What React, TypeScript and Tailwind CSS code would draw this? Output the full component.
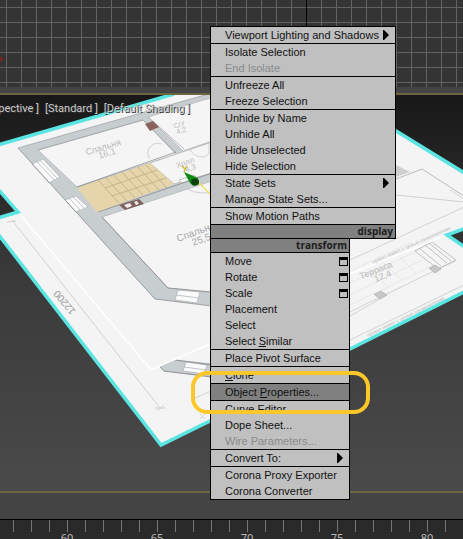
type Item = {
  label: string;
  hotkey?: number;
  disabled?: boolean;
  submenu?: boolean;
  options?: boolean;
  active?: boolean;
};

const displayGroups: Item[][] = [
  [{ label: "Viewport Lighting and Shadows", submenu: true }],
  [{ label: "Isolate Selection" }, { label: "End Isolate", disabled: true }],
  [{ label: "Unfreeze All" }, { label: "Freeze Selection" }],
  [
    { label: "Unhide by Name" },
    { label: "Unhide All" },
    { label: "Hide Unselected" },
    { label: "Hide Selection" },
  ],
  [{ label: "State Sets", submenu: true }, { label: "Manage State Sets..." }],
  [{ label: "Show Motion Paths" }],
];

const transformGroups: Item[][] = [
  [
    { label: "Move", options: true },
    { label: "Rotate", options: true },
    { label: "Scale", options: true },
    { label: "Placement" },
    { label: "Select" },
    { label: "Select Similar", hotkey: 7 },
  ],
  [{ label: "Place Pivot Surface" }],
  [{ label: "Clone", hotkey: 0 }],
  [{ label: "Object Properties...", hotkey: 7, active: true }],
  [
    { label: "Curve Editor" },
    { label: "Dope Sheet..." },
    { label: "Wire Parameters...", disabled: true },
  ],
  [{ label: "Convert To:", submenu: true }],
  [{ label: "Corona Proxy Exporter" }, { label: "Corona Converter" }],
];

const viewportLabels = ["[Perspective ]", "[Standard ]", "[Default Shading ]"];

function Label({ text, hotkey }: { text: string; hotkey?: number }) {
  if (hotkey === undefined) return <span>{text}</span>;
  return (
    <span>
      {text.slice(0, hotkey)}
      <u>{text[hotkey]}</u>
      {text.slice(hotkey + 1)}
    </span>
  );
}

function MenuItem({ item }: { item: Item }) {
  return (
    <li className={item.active ? "bg-[#808080]" : ""}>
      <button
        type="button"
        disabled={item.disabled}
        className="flex h-4 w-full items-center justify-between whitespace-nowrap pl-3.5 text-left leading-4 text-[#111111] disabled:text-[#8a8a8a]"
      >
        <Label text={item.label} hotkey={item.hotkey} />
        {item.submenu && (
          <svg className="mr-1.5 h-[10px] w-[6px] shrink-0" viewBox="0 0 6 10" aria-hidden="true">
            <path d="M0 0H1L6 5L1 10H0Z" fill="#000" />
          </svg>
        )}
        {item.options && <span className="mr-px h-[9px] w-[9px] border border-t-[3px] border-black" />}
      </button>
    </li>
  );
}

function Groups({ groups }: { groups: Item[][] }) {
  return (
    <div className="divide-y divide-black">
      {groups.map((group) => (
        <ul key={group[0].label}>
          {group.map((item) => (
            <MenuItem key={item.label} item={item} />
          ))}
        </ul>
      ))}
    </div>
  );
}

function QuadTitle({ children }: { children: string }) {
  return (
    <h2 className="h-[13px] bg-[#808080] pr-0.5 text-right font-['Open_Sans',sans-serif] text-[10px] font-bold leading-[12px] text-[#1c1c1c]">
      {children}
    </h2>
  );
}

function GridViewport() {
  return (
    <section aria-label="Top viewport" className="h-[87px] w-full shrink-0 bg-[#343434]">
      <svg className="h-full w-full" aria-hidden="true">
        <defs>
          <pattern id="grid" x="6" y="7" width="15" height="15" patternUnits="userSpaceOnUse">
            <path d="M0 0H15V1H1V15H0Z" fill="#626262" />
          </pattern>
        </defs>
        <rect width="100%" height="100%" fill="url(#grid)" />
        <rect x="306" width="1" height="87" fill="#000" />
        <circle cx="0" cy="59" r="2.5" fill="#7a2020" />
      </svg>
    </section>
  );
}

function FloorPlan() {
  return (
    <svg
      className="absolute inset-0 h-full w-full"
      viewBox="0 95 463 396"
      preserveAspectRatio="xMinYMin slice"
      aria-hidden="true"
    >
      <path
        d="M0 145L174 94H336L464 173V228L447 235L464 247V292L350 349L210 421L161 445L0 236V217L18 212L0 191Z"
        fill="#f4f4f4"
      />
      <g fill="none" stroke="#b4b8ba" strokeWidth="0.8">
        <path d="M18 148L215 92V306L155 299Z" fill="#c8cdd0" stroke="none" />
        <path d="M38 150L143 120L176 154L77 187Z" fill="#f5f5f5" />
        <path d="M148 117L200 101L215 97V140L183 151Z" fill="#f5f5f5" />
        <path d="M150 163L215 141V172L174 184Z" fill="#f5f5f5" />
        <path d="M102 217L215 180V293L168 288Z" fill="#f5f5f5" />
        <path d="M32 164L43 159L60 177L49 183Z" fill="#fafafa" />
        <path d="M36 161L54 180M40 160L57 178" />
        <path d="M65 200L76 196L88 207L76 212Z" fill="#fafafa" />
        <path d="M69 198L80 210M73 197L84 208" />
        <path d="M178 290L200 292L197 303L175 300Z" fill="#fafafa" />
        <path d="M176 295L199 298" />
        <path d="M160 367L175 360L212 364V377L164 371Z" fill="#c8cdd0" />
        <path d="M186 362L207 365L204 374L183 371Z" fill="#fafafa" />
        <path d="M184 367L206 370" />
        <path d="M179 180L194 175L197 178L182 183Z" fill="#fafafa" />
      </g>
      <g fill="none" stroke="#7b7f82" strokeWidth="0.7">
        <path d="M18 148L155 299L212 306M102 217L168 288L212 292M77 187L176 152M98 212L212 173" />
        <path d="M160 367L164 371L212 377M175 360L212 365" />
      </g>
      <path d="M18 148L212 93M38 150L143 120L176 153M148 117L184 149" fill="none" stroke="#9b9fa1" strokeWidth="0.7" />
      <path d="M77 188L150 163L174 184L97 212Z" fill="#e6d4ab" />
      <path
        d="M98 180L119 203M106 178L127 201M114 175L135 198M122 172L143 195M130 170L151 193M138 167L159 190M146 165L167 188M105 188L157 170M112 196L166 178"
        fill="none"
        stroke="#c0b086"
        strokeWidth="0.9"
      />
      <path d="M145 124L153 121L159 127L150 131Z" fill="#8b625c" />
      <path d="M119 205L139 199L144 204L125 210Z" fill="#7f605c" />
      <path d="M124 205L130 203L132 206L127 208ZM134 202L137 201L139 204L136 205Z" fill="#eee" />
      <g fill="none" stroke="#c8c8c8" strokeWidth="0.8">
        <path d="M150 159Q145 152 151 146Q155 142 162 144" />
        <path d="M190 150Q199 162 209 154V143M180 184Q193 196 212 192" />
        <path d="M12 220L160 408M7 222L16 221M155 408L166 408M157 411L164 405M211 391L191 400M200 414L205 419M200 419L205 414" />
        <path d="M350 260L464 207M396 195L464 202M450 190L464 199M350 312L440 268L455 261M350 316L380 299M350 340L464 285" />
      </g>
      <path d="M396 165L410 172L396 177Z" fill="#cfcfcf" />
      <path d="M396 179L422 169L464 196" fill="none" stroke="#bbbbbb" strokeWidth="1" />
      <g fill="none" stroke="#b4b4b4" strokeWidth="0.8">
        <path d="M415 251L432 242L456 260L438 269ZM419 248L441 266M425 245L447 263M429 243L451 261" />
        <path d="M429 268L435 265L441 269L435 273ZM374 294L381 291L387 295L380 299Z" fill="#c7c7c7" />
      </g>
      <path
        d="M350 271L410 243M350 283L415 252M350 295L422 260M350 305L430 267M362 264L388 287M378 258L402 280M394 251L416 273"
        fill="none"
        stroke="#e3e3e3"
        strokeWidth="0.7"
      />
      <g fill="none" stroke="#fff" strokeWidth="1.4">
        <path d="M18 212L151 370L212 343M350 274L447 235" />
      </g>
      <g fill="#b8b8b8" className="font-['Liberation_Sans',sans-serif]">
        <g transform="translate(104 150) rotate(-17)" textAnchor="middle" fontSize="9">
          <text>Спальня</text>
          <text x="2" y="7">16,1</text>
        </g>
        <g transform="translate(186 165) rotate(-20)" textAnchor="middle" fontSize="8">
          <text>Холл</text>
          <text x="3" y="7">4,3</text>
        </g>
        <g transform="translate(180 127) rotate(-18)" textAnchor="middle" fontSize="7">
          <text>С/У</text>
          <text y="6">4,2</text>
        </g>
        <g transform="translate(178 242) rotate(-20)" fontSize="10" fill="#a8a8a8">
          <text>Спальня</text>
          <text x="13" y="9">25,5</text>
        </g>
        <g transform="translate(377 273) rotate(-22)" textAnchor="middle" fontSize="9">
          <text>Терраса</text>
          <text x="4" y="8">12,4</text>
        </g>
        <text transform="translate(76 311) rotate(-130)" fontSize="10" fill="#999999">12200</text>
        <text transform="translate(373 264) rotate(-24)" fontSize="5">проект имеет с целью ознакомления</text>
        <text transform="translate(368 337) rotate(-26)" fontSize="5">проект имеет с целью ознакомления</text>
      </g>
      <g fill="none" stroke="#5be5e2" strokeWidth="3.5">
        <path d="M-2 145L174 94M336 94L466 174M466 228L447 235L466 248M-2 218L18 212L-2 189M466 291L350 349L210 421L161 445L-2 234" />
      </g>
      <path d="M198 182L211 195" stroke="#eee04a" strokeWidth="1.2" />
      <path d="M184 172L198 178L199 183L194 186L190 183Z" fill="#0b8a14" />
      <ellipse cx="195" cy="182" rx="4" ry="3.5" fill="#08430c" />
      <path d="M182 166L185 169L187 166M185 169L184 172" fill="none" stroke="#c9bd2e" strokeWidth="1.3" />
    </svg>
  );
}

const firstFrame = 57;
const frames = Array.from({ length: 40 }, (_, i) => firstFrame + i);

export default function App() {
  return (
    <main className="relative flex h-screen w-full flex-col overflow-hidden bg-[#444444] font-['Liberation_Sans',Arial,sans-serif] text-[11px]">
      <GridViewport />
      <section
        aria-label="Perspective viewport"
        className="relative mt-1.5 min-h-0 flex-1 overflow-hidden border-y-2 border-[#6f6440] bg-linear-to-b from-[#181818] via-[#3a3a3a] via-45% to-[#4a4a4a]"
      >
        <FloorPlan />
        <div className="relative flex w-[190px] justify-end gap-1.5 whitespace-nowrap pt-1.5 font-['Roboto',sans-serif] text-[11px] leading-4 text-[#cccccc]">
          {viewportLabels.map((label) => (
            <button key={label} type="button" className="[text-shadow:1px_1px_0_#333333]">
              {label}
            </button>
          ))}
        </div>
      </section>
      <div className="h-[26px] shrink-0" />
      <footer className="flex h-5 shrink-0 overflow-hidden border-t border-black bg-[#2a2a2a] pl-1">
        {frames.map((frame) => (
          <div key={frame} className="flex w-[18px] shrink-0 flex-col items-center">
            <span className="h-3 w-px shrink-0 bg-[#777777]" />
            {frame % 5 === 0 && (
              <span className="font-['Noto_Sans',sans-serif] text-[11px] leading-3 text-[#bbbbbb]">{frame}</span>
            )}
          </div>
        ))}
      </footer>

      <nav aria-label="Quad menu" className="absolute left-[210px] top-[26px]">
        <section className="w-[186px] border border-black bg-[#c0c0c0]">
          <Groups groups={displayGroups} />
          <div className="border-t border-black">
            <QuadTitle>display</QuadTitle>
          </div>
        </section>
        <section className="w-[140px] border border-t-0 border-black bg-[#c0c0c0]">
          <div className="border-b border-black">
            <QuadTitle>transform</QuadTitle>
          </div>
          <Groups groups={transformGroups} />
        </section>
      </nav>
      <div className="pointer-events-none absolute left-[191px] top-[371px] h-[43px] w-[179px] rounded-2xl border-4 border-[#fcc72b]" />
    </main>
  );
}
